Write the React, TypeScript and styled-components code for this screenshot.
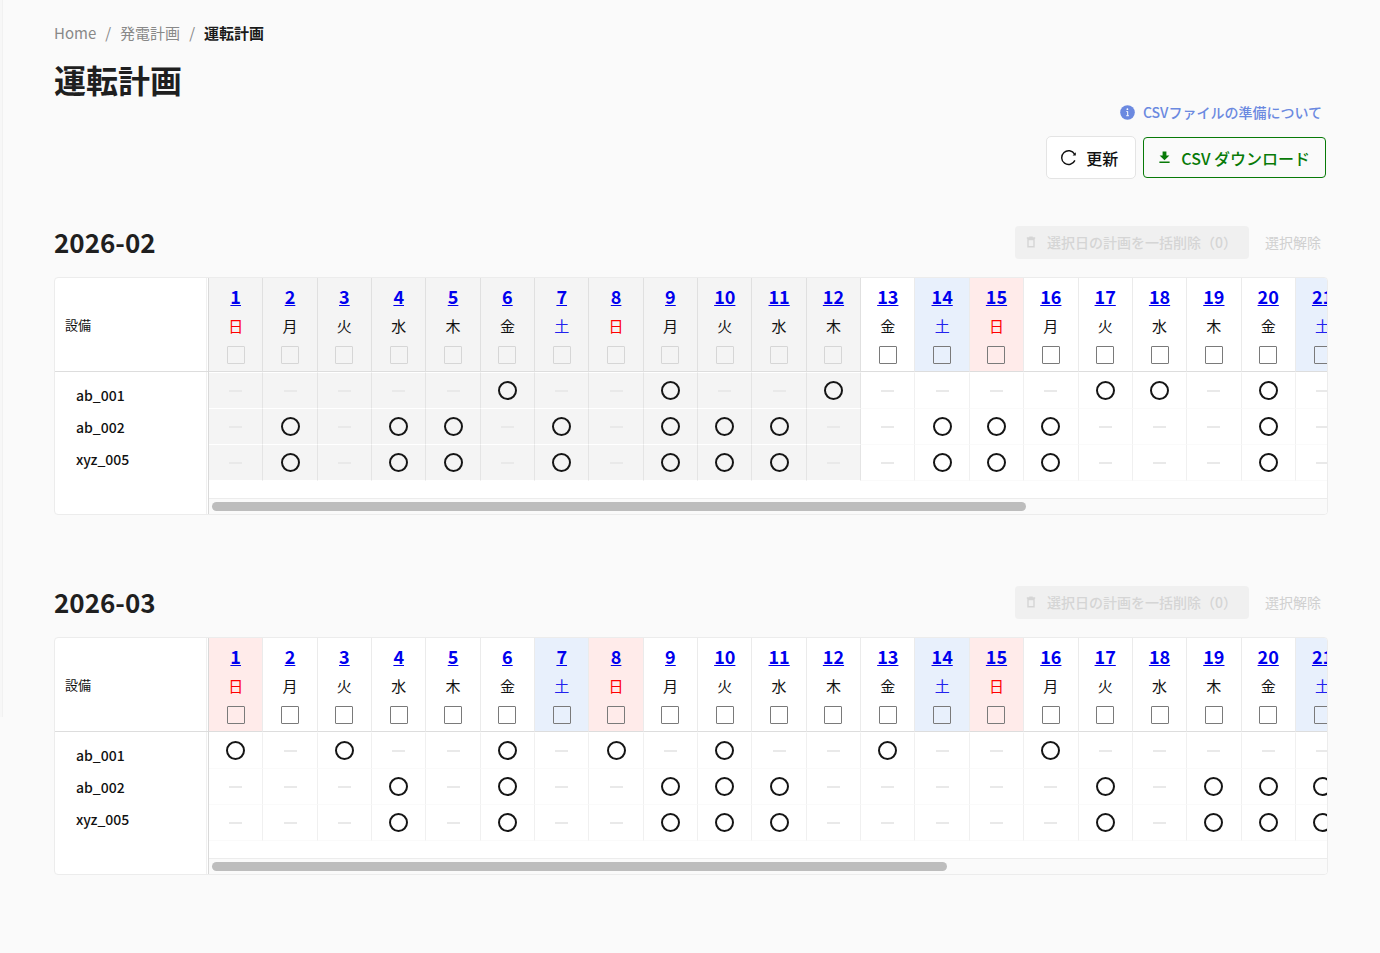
import React, { useLayoutEffect, useRef, useState } from 'react';
import styled, { createGlobalStyle, css } from 'styled-components';

const Global = createGlobalStyle`
  *, *::before, *::after { box-sizing: border-box; }
  body {
    margin: 0;
    background: #fafafa;
    color: #111;
    font-family: "Noto Sans CJK JP", "Noto Sans", sans-serif;
    font-size: 14px;
  }
  button { font-family: inherit; }
`;

const Shell = styled.div`
  position: relative;
  min-height: 100vh;
  padding: 21px 52px 40px 54px;
`;

const SideEdge = styled.div`
  position: absolute;
  top: 0;
  left: 0;
  width: 3px;
  height: 717px;
  background: #f7f7f7;
  border-right: 1px solid #f1f1f1;
`;

const Crumbs = styled.nav`
  display: flex;
  gap: 9px;
  font-size: 15px;
  line-height: 24px;
  color: #888;
`;

const CrumbLink = styled.a`
  color: inherit;
  text-decoration: none;
`;

const CrumbCurrent = styled.span`
  color: #1a1a1a;
  font-weight: 700;
`;

const Title = styled.h1`
  margin: 10px 0 0;
  font-size: 32px;
  line-height: 48px;
  font-weight: 700;
  color: #1f1f1f;
`;

const Actions = styled.div`
  display: flex;
  flex-direction: column;
  align-items: flex-end;
`;

const HelpLink = styled.a`
  display: flex;
  align-items: center;
  gap: 8px;
  margin: -3px 6px 0 0;
  font-size: 14px;
  line-height: 24px;
  font-weight: 500;
  color: #6b89e0;
  text-decoration: none;
`;

const ButtonRow = styled.div`
  display: flex;
  align-items: center;
  gap: 7px;
  margin: 12px 2px 0 0;
`;

const ActionButton = styled.button<{ $primary?: boolean }>`
  display: flex;
  align-items: center;
  gap: 9px;
  height: 43px;
  padding: 0 17px 0 13px;
  border: 1px solid #e4e4e4;
  border-radius: 5px;
  background: #fff;
  color: #111;
  font-size: 16px;
  line-height: 24px;
  font-weight: 500;
  ${(p) =>
    p.$primary &&
    css`
      height: 41px;
      padding: 0 15px 0 13px;
      border-color: #087a08;
      border-radius: 4px;
      background: #fafafa;
      color: #087a08;
    `}
`;

const Month = styled.section`
  margin-top: 43px;
  & + & { margin-top: 67px; }
`;

const MonthHead = styled.header`
  display: flex;
  align-items: center;
  height: 40px;
  margin-bottom: 15px;
`;

const MonthTitle = styled.h2`
  flex: 1;
  margin: 0;
  font-size: 26px;
  line-height: 40px;
  font-weight: 700;
  color: #1f1f1f;
`;

const DeleteButton = styled.button`
  display: flex;
  align-items: center;
  gap: 9px;
  height: 33px;
  padding: 0 12px 0 9px;
  border: 0;
  border-radius: 4px;
  background: #f0f0f0;
  color: #d5d5d5;
  font-size: 14px;
  font-weight: 500;
`;

const ClearButton = styled.button`
  margin-right: 7px;
  padding: 0 0 0 16px;
  border: 0;
  background: none;
  color: #d0d0d0;
  font-size: 14px;
`;

const Card = styled.div`
  display: grid;
  grid-template-columns: 154px minmax(0, 1fr);
  height: 238px;
  border: 1px solid #ececec;
  border-radius: 4px;
  background: #fff;
  overflow: hidden;
`;

const Equipment = styled.div`
  border-right: 1px solid #d9d9d9;
  box-shadow: inset -1px 0 #fff, inset -2px 0 #f0f0f0;
`;

const EquipmentHead = styled.div`
  height: 94px;
  padding: 35px 10px 0;
  border-bottom: 1px solid #ddd;
  font-size: 13px;
  line-height: 24px;
`;

const EquipmentList = styled.ul`
  list-style: none;
  margin: 7px 0 0;
  padding: 0 0 0 21px;
  font-size: 14px;
  line-height: 32px;
  font-weight: 500;
`;

const Calendar = styled.div`
  display: flex;
  flex-direction: column;
`;

const Scroller = styled.div`
  flex: 1;
  overflow-x: auto;
  overflow-y: hidden;
  scrollbar-width: none;
`;

const DayTable = styled.table<{ $width: number }>`
  table-layout: fixed;
  width: ${(p) => p.$width}px;
  border-collapse: separate;
  border-spacing: 0;
  text-align: center;
`;

type Tone = 'past' | 'sat' | 'sun' | 'plain';
const toneFill: Record<Tone, string> = { past: '#f4f4f4', sat: '#e8f0fc', sun: '#ffebea', plain: '#fff' };

const DayHead = styled.th<{ $tone: Tone }>`
  height: 94px;
  padding: 0;
  vertical-align: top;
  font-weight: 400;
  border-right: 1px solid ${(p) => (p.$tone === 'past' ? '#e0e0e0' : '#ebebeb')};
  border-bottom: 1px solid #ddd;
  background: ${(p) => toneFill[p.$tone]};
`;

const DayLink = styled.a`
  display: block;
  margin-top: 4px;
  font-size: 18px;
  line-height: 28px;
  font-weight: 700;
  color: #00e;
  text-decoration: underline;
`;

const Weekday = styled.span<{ $index: number }>`
  display: block;
  margin-top: 4px;
  font-size: 15px;
  line-height: 24px;
  color: ${(p) => (p.$index === 0 ? '#f00' : p.$index === 6 ? '#22e' : '#111')};
`;

const DayCheck = styled.input`
  appearance: none;
  display: block;
  width: 18px;
  height: 18px;
  margin: 8px auto 0;
  border: 1px solid #7a7a7a;
  border-radius: 1px;
  &:disabled { border-color: #d6d6d6; }
`;

const Slot = styled.td<{ $past: boolean }>`
  height: 36px;
  padding: 0;
  border-right: 1px solid ${(p) => (p.$past ? '#e4e4e4' : '#f0f0f0')};
  border-bottom: 1px solid ${(p) => (p.$past ? '#fff' : '#fafafa')};
  background: ${(p) => (p.$past ? '#f4f4f4' : '#fff')};
  tr:first-child > & {
    height: 37px;
    border-top: 1px solid #fff;
  }
`;

const Ring = styled.span`
  display: block;
  width: 19px;
  height: 19px;
  margin: 0 auto;
  border: 2px solid #151515;
  border-radius: 50%;
`;

const Dash = styled.span`
  display: block;
  width: 13px;
  height: 2px;
  margin: 0 auto;
  background: #e9e9e9;
`;

const Track = styled.div`
  height: 16px;
  padding: 3px 7px 3px 3px;
  border-top: 1px solid #ececec;
  background: #fafafa;
`;

const Thumb = styled.div`
  height: 9px;
  border-radius: 5px;
  background: #bdbdbd;
`;

const InfoIcon = () => (
  <svg width="15" height="15" viewBox="0 0 15 15" aria-hidden="true">
    <circle cx="7.5" cy="7.5" r="7.3" fill="#6b89e0" />
    <path d="M6.4 6.5h1.3v4M6.3 10.7h2.6" stroke="#fff" strokeWidth="1" fill="none" />
    <circle cx="7.4" cy="4.2" r=".9" fill="#fff" />
  </svg>
);

const ReloadIcon = () => (
  <svg width="17" height="17" viewBox="0 0 17 17" fill="none" stroke="#111" strokeWidth="1.4" aria-hidden="true">
    <path d="M14.9 11.4A6.9 6.9 0 1 1 14.6 5.2" />
    <path d="M15.8 3.2v3.2h-3.2z" fill="#111" stroke="none" />
  </svg>
);

const DownloadIcon = () => (
  <svg width="15" height="15" viewBox="0 0 15 15" fill="#087a08" aria-hidden="true">
    <path d="M5.6 1.5h3.8v4h3L7.5 10.2 2.6 5.5h3zM2.4 11.6h10.2v1.5H2.4z" />
  </svg>
);

const TrashIcon = () => (
  <svg width="14" height="14" viewBox="0 0 14 14" fill="none" stroke="#d5d5d5" strokeWidth="1.4" aria-hidden="true">
    <path d="M2.8 3h8.4M5.3 2.3h3.4M4 4.5v7.3h6V4.5z" />
  </svg>
);

const names = ['ab_001', 'ab_002', 'xyz_005'];
const weekdays = ['日', '月', '火', '水', '木', '金', '土'];

interface Plan {
  label: string;
  days: number;
  width: number;
  pastUntil: number;
  runs: number[][];
}

const plans: Plan[] = [
  {
    label: '2026-02',
    days: 28,
    width: 1522,
    pastUntil: 12,
    runs: [
      [6, 9, 12, 17, 18, 20],
      [2, 4, 5, 7, 9, 10, 11, 14, 15, 16, 20],
      [2, 4, 5, 7, 9, 10, 11, 14, 15, 16, 20],
    ],
  },
  {
    label: '2026-03',
    days: 31,
    width: 1685,
    pastUntil: 0,
    runs: [
      [1, 3, 6, 8, 10, 13, 16],
      [4, 6, 9, 10, 11, 17, 19, 20, 21],
      [4, 6, 9, 10, 11, 17, 19, 20, 21],
    ],
  },
];

function toneOf(day: number, pastUntil: number): Tone {
  if (day <= pastUntil) return 'past';
  const w = (day - 1) % 7;
  return w === 0 ? 'sun' : w === 6 ? 'sat' : 'plain';
}

function MonthPlan({ plan }: { plan: Plan }) {
  const scroller = useRef<HTMLDivElement>(null);
  const [bar, setBar] = useState({ size: 0, offset: 0 });
  const measure = () => {
    const el = scroller.current;
    if (el) setBar({ size: (el.clientWidth / el.scrollWidth) * 100, offset: (el.scrollLeft / el.scrollWidth) * 100 });
  };
  useLayoutEffect(() => {
    measure();
    window.addEventListener('resize', measure);
    return () => window.removeEventListener('resize', measure);
  }, []);
  const days = Array.from({ length: plan.days }, (_, i) => i + 1);

  return (
    <Month>
      <MonthHead>
        <MonthTitle>{plan.label}</MonthTitle>
        <DeleteButton type="button" disabled>
          <TrashIcon />
          選択日の計画を一括削除（0）
        </DeleteButton>
        <ClearButton type="button" disabled>選択解除</ClearButton>
      </MonthHead>
      <Card>
        <Equipment>
          <EquipmentHead>設備</EquipmentHead>
          <EquipmentList>
            {names.map((n) => <li key={n}>{n}</li>)}
          </EquipmentList>
        </Equipment>
        <Calendar>
          <Scroller ref={scroller} onScroll={measure}>
            <DayTable $width={plan.width}>
              <thead>
                <tr>
                  {days.map((d) => (
                    <DayHead key={d} scope="col" $tone={toneOf(d, plan.pastUntil)}>
                      <DayLink href={`#${plan.label}-${d}`}>{d}</DayLink>
                      <Weekday $index={(d - 1) % 7}>{weekdays[(d - 1) % 7]}</Weekday>
                      <DayCheck type="checkbox" aria-label={`${plan.label}-${d}`} disabled={d <= plan.pastUntil} />
                    </DayHead>
                  ))}
                </tr>
              </thead>
              <tbody>
                {plan.runs.map((run, r) => (
                  <tr key={names[r]} aria-label={names[r]}>
                    {days.map((d) => (
                      <Slot key={d} $past={d <= plan.pastUntil}>{run.includes(d) ? <Ring /> : <Dash />}</Slot>
                    ))}
                  </tr>
                ))}
              </tbody>
            </DayTable>
          </Scroller>
          <Track>
            <Thumb style={{ width: `${bar.size}%`, marginLeft: `${bar.offset}%` }} />
          </Track>
        </Calendar>
      </Card>
    </Month>
  );
}

export default function App() {
  return (
    <>
      <Global />
      <Shell>
        <SideEdge />
        <Crumbs>
          <CrumbLink href="#home">Home</CrumbLink>
          <span>/</span>
          <CrumbLink href="#generation">発電計画</CrumbLink>
          <span>/</span>
          <CrumbCurrent>運転計画</CrumbCurrent>
        </Crumbs>
        <Title>運転計画</Title>
        <Actions>
          <HelpLink href="#csv-help">
            <InfoIcon />
            CSVファイルの準備について
          </HelpLink>
          <ButtonRow>
            <ActionButton type="button">
              <ReloadIcon />
              更新
            </ActionButton>
            <ActionButton type="button" $primary>
              <DownloadIcon />
              CSV ダウンロード
            </ActionButton>
          </ButtonRow>
        </Actions>
        {plans.map((p) => <MonthPlan key={p.label} plan={p} />)}
      </Shell>
    </>
  );
}
